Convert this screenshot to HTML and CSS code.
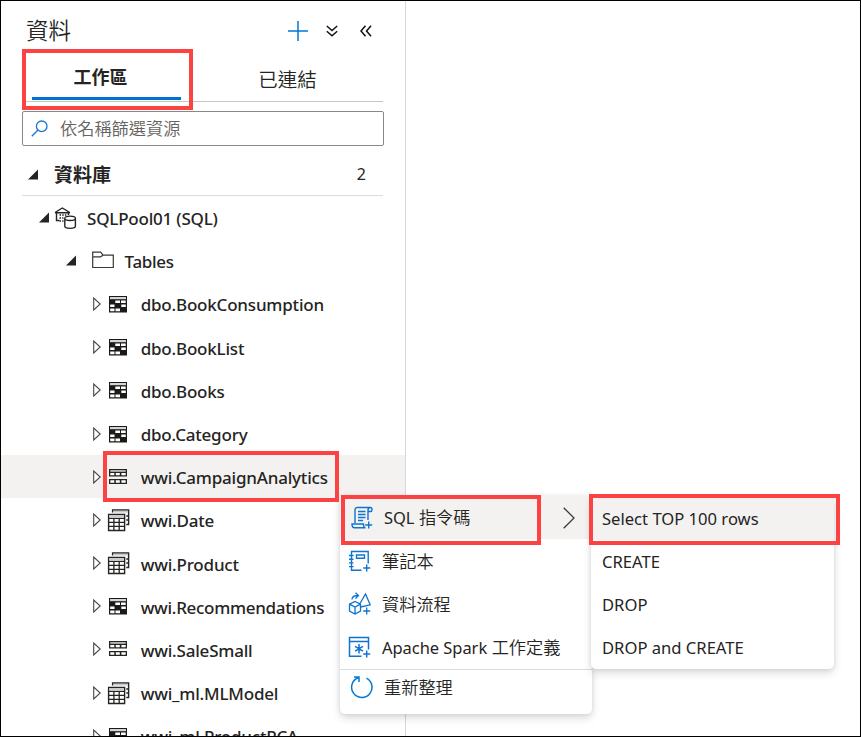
FILE: index.html
```
<!DOCTYPE html>
<html lang="zh-Hant">
<head>
<meta charset="utf-8">
<title>資料</title>
<link rel="stylesheet" href="styles.css">
</head>
<body>
<svg class="defs" aria-hidden="true">
  <symbol id="caret" viewBox="0 0 8 14"><path d="M.7 1v12L7.2 7z" fill="#fff" stroke="#4a4642" stroke-width="1.1"/></symbol>
  <symbol id="open" viewBox="0 0 11 11"><path d="M10 .5v10H0z" fill="#252423"/></symbol>
  <symbol id="hash" viewBox="0 0 24 24">
    <path d="M3 4h18v16.500H3z" fill="#1b1a19"/><path d="M4 5h16v2.200H4z" fill="#d4d4d4"/>
    <path d="M9.300 8.600h4.700v2.500H9.300zM15 8.600h4.700v2.500H15zM4.200 12.400h4.300v2.700H4.200zM15.300 12.400h4.500v2.700h-4.500zM4.200 16.500h4.300v2.800H4.200zM9.500 16.500H14v2.800H9.500z" fill="#fff"/>
  </symbol>
  <symbol id="round" viewBox="0 0 24 24">
    <path d="M3 4h18v7.500H3zM3 14h18v5H3z" fill="#252423"/><path d="M4.300 5.200h15.400v1.500H4.300z" fill="#ddd"/>
    <path d="M4.300 8h4v2.300h-4zM9.800 8h4v2.300h-4zM15.400 8h4.300v2.300h-4.300zM4.300 15.200h4v2.500h-4zM9.800 15.200h4v2.500h-4zM15.400 15.200h4.300v2.500h-4.300z" fill="#fff"/>
  </symbol>
  <symbol id="replica" viewBox="0 0 24 24">
    <path d="M6.600 4.500V2h16v14.500h-2.300M20.300 8h2M20.300 12h2" fill="none" stroke="#252423" stroke-width="1.4"/><path d="M7.200 2.700h14.600v1.800H7.200z" fill="#c8c8c8"/>
    <path d="M2.600 6.500h16v16h-16z" fill="#fff" stroke="#252423" stroke-width="1.400"/>
    <path d="M2.600 10.300h16M2.600 14.300h16M2.600 18.300h16M7.900 10v12.500M13.200 10v12.500" stroke="#252423" stroke-width="1.300"/><path d="M3.300 7.200h14.600v2H3.300z" fill="#ccc"/>
  </symbol>
</svg>
<main class="window">
  <aside class="sidebar">
    <header class="head">
      <h1>資料</h1>
      <div class="tools">
        <svg width="20" height="20" viewBox="0 0 20 20"><path d="M10 0v20M0 10h20" stroke="#0078d4" stroke-width="1.500"/></svg>
        <svg width="12" height="12" viewBox="0 0 12 12" fill="none" stroke="#111" stroke-width="1.500"><path d="M.8 1 6 5.500 11.200 1M.8 6.300 6 10.800l5.200-4.500"/></svg>
        <svg width="12" height="12" viewBox="0 0 12 12" fill="none" stroke="#111" stroke-width="1.500"><path d="M5.500.8 1 6l4.500 5.200M11 .8 6.500 6l4.500 5.200"/></svg>
      </div>
    </header>
    <nav class="tabs">
      <div class="tab active"><span>工作區</span><i class="ring"></i></div>
      <div class="tab">已連結</div>
    </nav>
    <div class="search">
      <svg width="17" height="17" viewBox="0 0 17 17" fill="none" stroke="#1a78d2" stroke-width="1.300"><circle cx="10.700" cy="6.300" r="5.300"/><path d="M7 10 .8 16.200"/></svg>
      <span>依名稱篩選資源</span>
    </div>
    <div class="section"><svg class="open"><use href="#open"/></svg><h2>資料庫</h2><span class="count">2</span></div>
    <div class="tree">
      <div class="node pool"><svg class="open"><use href="#open"/></svg>
        <svg width="24" height="24" viewBox="0 0 24 24" fill="none" stroke="#252423" stroke-width="1.400"><path d="M1 6.500 8.300 2l7.500 4.500M1 6.700h15M2.500 7v7.500h3M14.500 7v2"/><path d="M5.500 9h7M5.500 12h4M5.500 15h4" stroke-dasharray="1.500 1.200"/><path d="M10.800 12.500v7.800c0 2.700 10.600 2.700 10.600 0v-7.800" fill="#fff"/><ellipse cx="16.100" cy="12.300" rx="5.300" ry="2.200" fill="#fff"/></svg>
        <span>SQLPool01 (SQL)</span></div>
      <div class="node folder"><svg class="open"><use href="#open"/></svg>
        <svg width="22" height="18" viewBox="0 0 22 18" fill="none" stroke="#3b3735" stroke-width="1.200"><path d="M.7 16.500V1.200h8l2.300 3h10.300v12.300zM.7 5.800h7.800l2.500-1.600"/></svg>
        <span>Tables</span></div>
      <div class="node leaf"><svg class="caret"><use href="#caret"/></svg><svg class="kind"><use href="#hash"/></svg><span>dbo.BookConsumption</span></div>
      <div class="node leaf"><svg class="caret"><use href="#caret"/></svg><svg class="kind"><use href="#hash"/></svg><span>dbo.BookList</span></div>
      <div class="node leaf"><svg class="caret"><use href="#caret"/></svg><svg class="kind"><use href="#hash"/></svg><span>dbo.Books</span></div>
      <div class="node leaf"><svg class="caret"><use href="#caret"/></svg><svg class="kind"><use href="#hash"/></svg><span>dbo.Category</span></div>
      <div class="node leaf selected"><svg class="caret"><use href="#caret"/></svg><svg class="kind"><use href="#round"/></svg><span>wwi.CampaignAnalytics</span><i class="ring"></i></div>
      <div class="node leaf"><svg class="caret"><use href="#caret"/></svg><svg class="kind"><use href="#replica"/></svg><span>wwi.Date</span></div>
      <div class="node leaf"><svg class="caret"><use href="#caret"/></svg><svg class="kind"><use href="#replica"/></svg><span>wwi.Product</span></div>
      <div class="node leaf tight"><svg class="caret"><use href="#caret"/></svg><svg class="kind"><use href="#hash"/></svg><span>wwi.Recommendations</span></div>
      <div class="node leaf"><svg class="caret"><use href="#caret"/></svg><svg class="kind"><use href="#round"/></svg><span>wwi.SaleSmall</span></div>
      <div class="node leaf"><svg class="caret"><use href="#caret"/></svg><svg class="kind"><use href="#replica"/></svg><span>wwi_ml.MLModel</span></div>
      <div class="node leaf"><svg class="caret"><use href="#caret"/></svg><svg class="kind"><use href="#hash"/></svg><span>wwi_ml.ProductPCA</span></div>
    </div>
  </aside>

  <div class="menu context">
    <div class="item hover first">
      <svg width="24" height="24" viewBox="0 0 24 24" fill="none" stroke="#0f73cf" stroke-width="1.400"><path d="M5 17V4c0-3 3-2.500 3-2.500h12.500c-2 0-2.500 1.500-2.500 3V14M20.500 1.500c2.200 0 2 4 0 4H18M2 18h11.500c0 2 .5 3.800 2 3.800H4.500C2.500 21.800 2 20 2 18zM8 5.500h7.500M8 8.500h7.500M8 11.500h7.500M8 14.500h5M18.700 15.500v7M15.200 19h7"/></svg>
      <span><b>SQL</b> 指令碼</span>
      <svg class="more" width="12" height="22" viewBox="0 0 12 22" fill="none" stroke="#3b3a39" stroke-width="1.300"><path d="m.7.700 10.300 10.300L.700 21.300"/></svg>
      <i class="ring"></i>
    </div>
    <div class="item">
      <svg width="24" height="24" viewBox="0 0 24 24" fill="none" stroke="#0f73cf" stroke-width="1.400"><path d="M13.500 21.300H3.500V2.500h16.700v12M1 6.500h4.500M1 10.200h4.500M1 13.900h4.500M1 17.600h4.500M8.500 6h8v3.200h-8zM18.700 15.500v7M15.200 19h7"/></svg>
      <span>筆記本</span>
    </div>
    <div class="item">
      <svg width="24" height="24" viewBox="0 0 24 24" fill="none" stroke="#0f73cf" stroke-width="1.300"><path d="M1.500 12.200 7 9.500l5.500 2.700v7L7 22l-5.500-2.800zM1.500 12.200 7 15l5.500-2.800M7 15v7M12 11.500 17.500 2l4.700 10.800-9.500 2.200M4 7.500c0-3 2-4 6-4M7.500.800l3 2.700-3 3M18.700 15.500v7M15.200 19h7"/></svg>
      <span>資料流程</span>
    </div>
    <div class="item">
      <svg width="24" height="24" viewBox="0 0 24 24" fill="none" stroke="#0f73cf" stroke-width="1.500"><path d="M13.500 21.300H1.500V2.500h19v12M1.500 6.500h19M11 9v9.500M7 11.400l8 4.800M15 11.400l-8 4.800M18.700 15.500v7M15.200 19h7"/></svg>
      <span><b>Apache Spark</b> 工作定義</span>
    </div>
    <div class="item refresh">
      <svg width="24" height="24" viewBox="0 0 24 24" fill="none" stroke="#0078d4" stroke-width="1.500"><path d="M16.500 3.200A10.200 10.200 0 1 1 8 2.800M4 2h5v5"/></svg>
      <span>重新整理</span>
    </div>
  </div>

  <div class="menu submenu">
    <div class="item hover"><span>Select TOP 100 rows</span><i class="ring"></i></div>
    <div class="item"><span>CREATE</span></div>
    <div class="item"><span>DROP</span></div>
    <div class="item"><span>DROP and CREATE</span></div>
  </div>
</main>
</body>
</html>
```
FILE: styles.css
```
* { box-sizing: border-box; }
body {
  margin: 0;
  font-family: "Noto Sans", "Noto Sans CJK TC", sans-serif;
  font-size: 17px;
  color: #252423;
}
svg { flex: none; display: block; }
.defs { position: absolute; width: 0; height: 0; }
.window {
  position: relative;
  width: 861px;
  height: 737px;
  overflow: hidden;
  border: 1px solid #000;
  background: #fff;
}
.sidebar { width: 405px; height: 735px; border-right: 1px solid #d9d9d9; overflow: hidden; }
h1, h2 { margin: 0; }
.head { display: flex; align-items: center; justify-content: space-between; height: 48px; padding: 12px 33px 0 25px; }
h1 { font-size: 22.500px; font-weight: 350; line-height: 34px; }
.tools { display: flex; align-items: center; }
.tools svg + svg { margin-left: 18px; }
.tools svg:last-child { margin-left: 22px; }

.tabs { display: flex; height: 53px; margin: 0 22px 0 21px; border-bottom: 1px solid #c8c6c4; }
.tab { flex: 1; padding: 15px 1px 0 0; text-align: center; font-size: 19.500px; font-weight: 350; line-height: 32px; }
.tab.active { position: relative; flex: none; width: 171px; padding: 12px 0 0; font-size: 18px; font-weight: 700; }
.tab.active span { display: block; width: 149px; height: 39px; margin-left: 10px; padding-right: 12px; border-bottom: 3px solid #0072d6; }

.ring { position: absolute; border: 4px solid #fc4242; z-index: 2; }
.tab .ring { left: 0; top: 0; width: 171px; height: 61px; }

.search {
  display: flex; align-items: center; gap: 12px;
  height: 35px; margin: 9px 21px 0 21px; padding-left: 8px;
  border: 1px solid #8a8886; border-radius: 2px;
  color: #666462; font-weight: 350; font-size: 17.200px;
}
.search span { padding-bottom: 2px; }
.section { display: flex; align-items: center; height: 50px; margin: 0 22px 0 21px; padding: 7px 17px 0 6px; border-bottom: 1px solid #dcdcdc; }
.open { width: 11px; height: 11px; }
h2 { margin-left: 15px; padding-top: 1px; font-size: 19px; line-height: 30px; font-weight: 700; }
.count { margin-left: auto; font-size: 16px; }

.node { position: relative; display: flex; align-items: center; height: 43.200px; font-weight: 500; letter-spacing: -.2px; white-space: nowrap; }
.node span { padding-top: 2px; }
.tight { letter-spacing: -.3px; }
.pool { padding-left: 38px; }
.pool svg + svg { margin-left: 4px; }
.pool span { margin-left: 9px; }
.folder { padding-left: 65px; }
.folder svg + svg { margin-left: 15px; margin-top: -2px; }
.folder span { margin-left: 10.500px; letter-spacing: -.3px; }
.leaf { padding-left: 92px; }
.caret { width: 8px; height: 14px; }
.kind { width: 24px; height: 24px; margin-left: 5.300px; }
.leaf span { margin-left: 10.400px; }
.selected { background: #f3f2f1; }
.selected .ring { left: 102px; top: -4px; width: 236px; height: 51px; }

.menu { position: absolute; background: #fff; border-radius: 5px; box-shadow: 0 4px 9px rgba(0,0,0,.15), 0 0 4px rgba(0,0,0,.08); }
.item { position: relative; display: flex; align-items: center; height: 43.200px; white-space: nowrap; }
.context { left: 339px; top: 495px; width: 252px; height: 218px; font-weight: 350; }
.context .item { padding-left: 8px; }
.context .item span { margin-left: 10px; padding-bottom: 1px; font-size: 17.200px; }
.context b { font-weight: 400; font-size: 16.500px; letter-spacing: -.05px; }
.context .first { padding-left: 10px; }
.context .item.first span { padding-bottom: 3px; }
.context .first .more { position: absolute; left: 223px; top: 11px; }
.hover { background: #f3f2f1; }
.first .ring { left: 1px; top: -1px; width: 200px; height: 50px; }
.context .refresh { height: 36px; padding-left: 10px; border-top: 1px solid #dcdcdc; }
.submenu { left: 590px; top: 496px; width: 243px; height: 172px; z-index: 3; }
.submenu .item { padding-left: 11px; font-size: 16.600px; }
.submenu .item span { padding-bottom: 1px; }
.submenu .ring { left: -2px; top: -3px; width: 251px; height: 51px; }
```
